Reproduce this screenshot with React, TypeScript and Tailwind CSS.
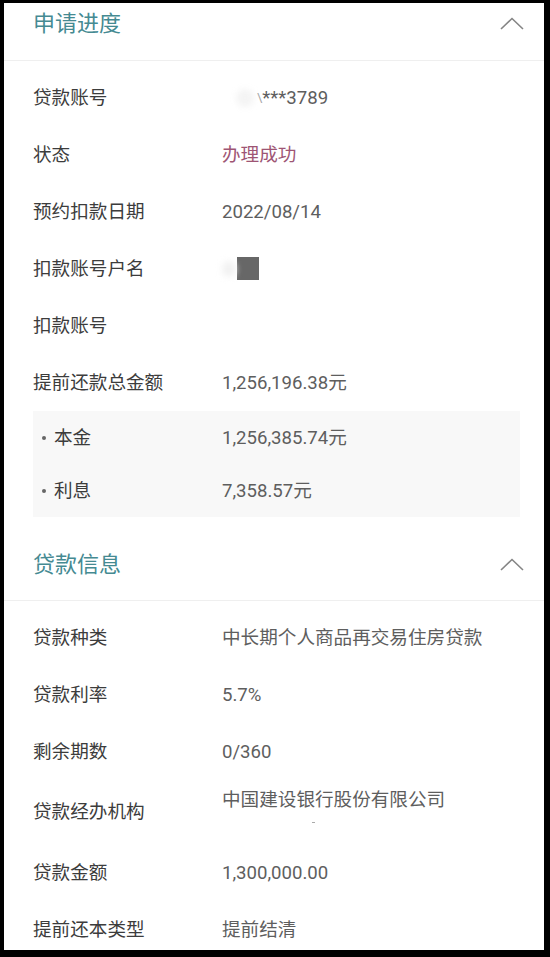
import React from 'react';

type Row = { label: string; value: React.ReactNode };

const font = { fontFamily: 'Roboto, "Noto Sans CJK SC", sans-serif' };

const Chevron: React.FC = () => (
  <svg width="24" height="13" viewBox="0 0 24 13" className="mr-[20px]">
    <polyline points="1,12 12,1.5 23,12" fill="none" stroke="#858585" strokeWidth="1.6" />
  </svg>
);

const InfoRow: React.FC<Row> = ({ label, value }) => (
  <div className="flex h-[57px] items-center">
    <div className="w-[189px] shrink-0 text-[#3c3c3c]">{label}</div>
    <div className="text-[#5e5e5e]">{value}</div>
  </div>
);

const progressRows: Row[] = [
  {
    label: '贷款账号',
    value: (
      <span className="flex items-center">
        <span className="ml-[14px] h-[18px] w-[18px] rounded-full bg-[#f4f4f4] blur-[3px]" />
        <span className="ml-[3px] text-[13px] text-[#a8a8a8]">\</span>
        <span>***3789</span>
      </span>
    ),
  },
  { label: '状态', value: <span className="text-[#9e5574]">办理成功</span> },
  { label: '预约扣款日期', value: '2022/08/14' },
  {
    label: '扣款账号户名',
    value: (
      <span className="flex items-center">
        <span className="h-[16px] w-[14px] rounded-full bg-[#f2f2f2] blur-[3px]" />
        <span className="ml-[1px] h-[23px] w-[22px] bg-[#676767]" />
      </span>
    ),
  },
  { label: '扣款账号', value: '' },
  { label: '提前还款总金额', value: '1,256,196.38元' },
];

const subRows: Row[] = [
  { label: '本金', value: '1,256,385.74元' },
  { label: '利息', value: '7,358.57元' },
];

export default function App() {
  return (
    <div className="min-h-screen bg-black pl-[4px] pr-[6px] pt-[3px]" style={font}>
      <div className="h-[947px] overflow-hidden bg-white text-[18.6px] leading-[24px]">
        {/* 申请进度 */}
        <div className="flex h-[58px] items-center justify-between border-b border-[#efefef] pb-[16px] pl-[29px]">
          <span className="text-[22px] text-[#458a92]">申请进度</span>
          <Chevron />
        </div>
        <div className="pl-[29px] pt-[8px]">
          {progressRows.map((r) => (
            <InfoRow key={r.label} {...r} />
          ))}
          <div className="mr-[24px] bg-[#f8f8f8]">
            {subRows.map((r) => (
              <div key={r.label} className="flex h-[53px] items-center">
                <div className="flex w-[189px] shrink-0 items-center pl-[9px] text-[#3c3c3c]">
                  <span className="mr-[8px] h-[4px] w-[4px] rounded-full bg-[#666]" />
                  {r.label}
                </div>
                <div className="text-[#5e5e5e]">{r.value}</div>
              </div>
            ))}
          </div>
        </div>

        {/* 贷款信息 */}
        <div className="mt-[12px] flex h-[72px] items-center justify-between border-b border-[#efefef] pl-[29px]">
          <span className="text-[22px] text-[#458a92]">贷款信息</span>
          <Chevron />
        </div>
        <div className="pl-[29px] pt-[8px]">
          <InfoRow label="贷款种类" value="中长期个人商品再交易住房贷款" />
          <InfoRow label="贷款利率" value="5.7%" />
          <InfoRow label="剩余期数" value="0/360" />
          <div className="flex h-[64px] items-center">
            <div className="w-[189px] shrink-0 text-[#3c3c3c]">贷款经办机构</div>
            <div className="flex h-full flex-col pt-[8px] text-[#5e5e5e]">
              <span>中国建设银行股份有限公司</span>
              <span className="ml-[90px] mt-[10px] h-[1px] w-[3px] bg-[#aaa]" />
            </div>
          </div>
          <InfoRow label="贷款金额" value="1,300,000.00" />
          <InfoRow label="提前还本类型" value="提前结清" />
        </div>
      </div>
    </div>
  );
}
